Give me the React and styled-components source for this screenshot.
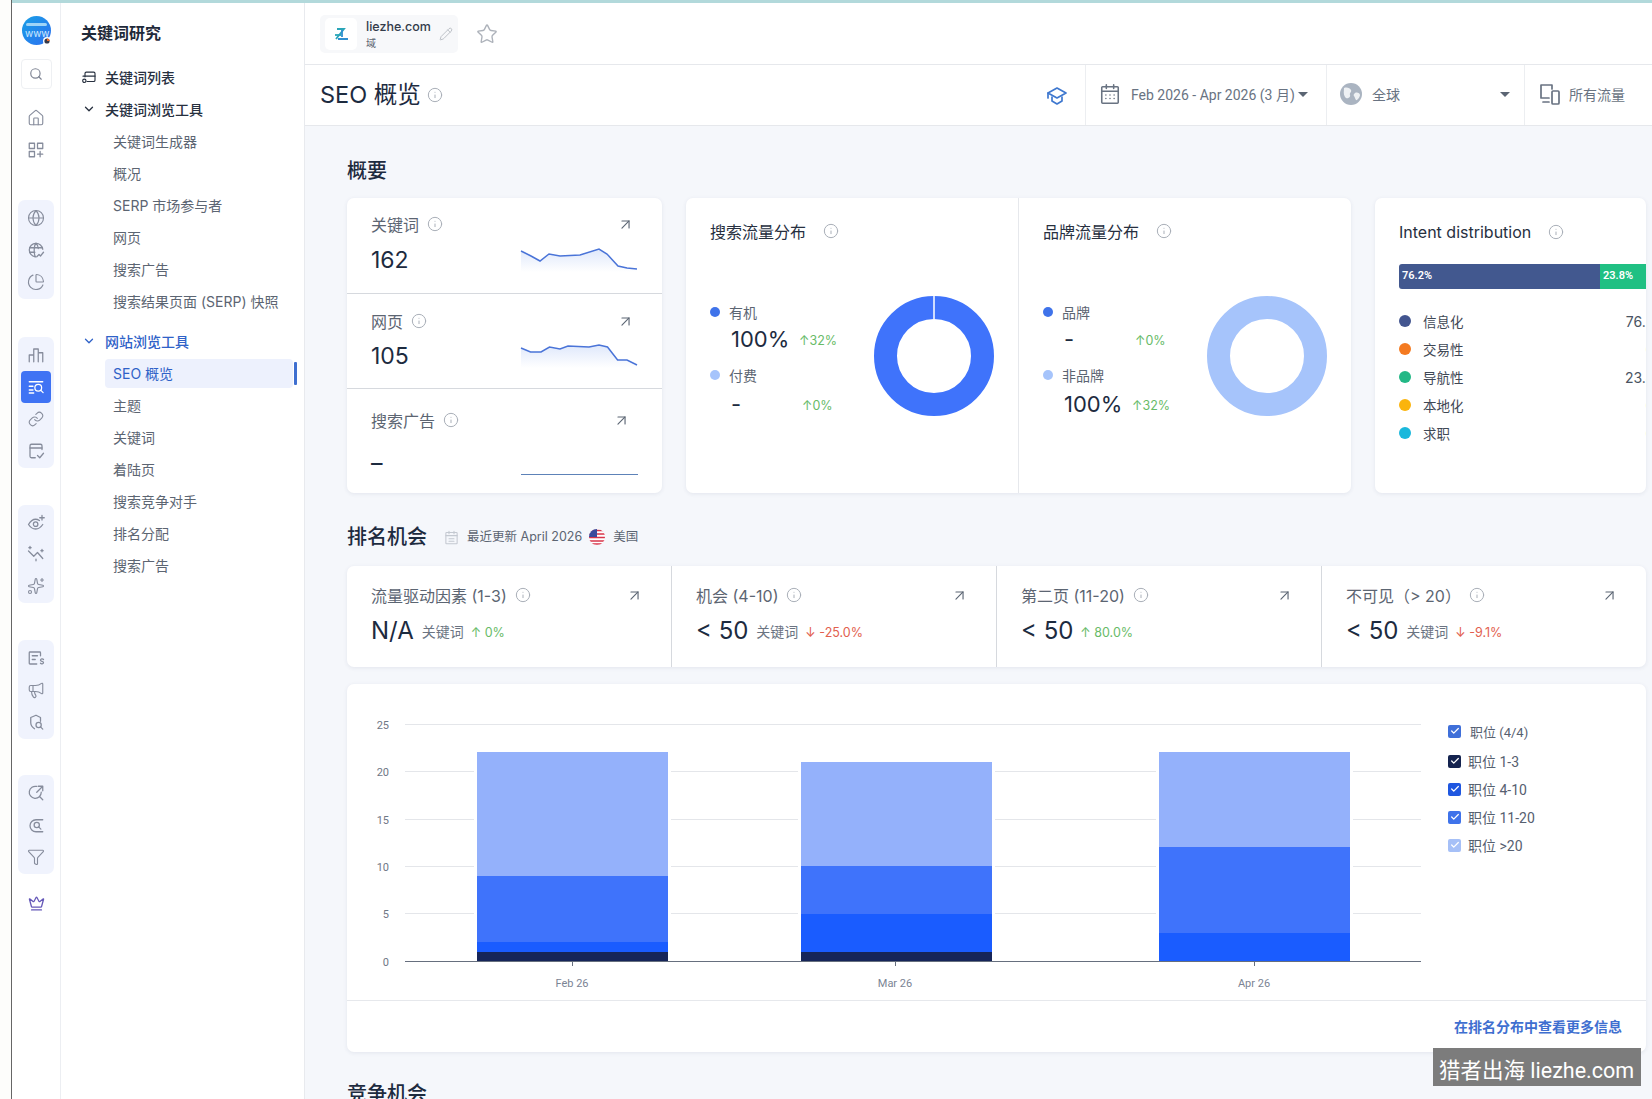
import React from "react";
import styled, { createGlobalStyle } from "styled-components";
import { Search, House, Globe, ChartPie, Link as LinkIcon, Sparkles, Megaphone, Funnel, Crown, Star, Pencil, Info, ArrowUpRight, ChevronDown, Check } from "lucide-react";

const Global = createGlobalStyle`
  html, body { margin: 0; padding: 0; height: 100%; background: #fff; overflow: hidden; }
  * { box-sizing: border-box; }
  body { font-family: Inter, "Noto Sans CJK SC", sans-serif; color: #1f2a3a; }
`;

const Page = styled.div`display: flex; position: relative; width: 1652px; height: 1099px; overflow: hidden; background: #fff;`;
const Gutter = styled.div`width: 12px; flex: none; background: #fdfdfb; border-right: 1px solid #666;`;
const Shell = styled.div`flex: 1; min-width: 0; display: flex; flex-direction: column;`;
const Strip = styled.div`height: 3px; flex: none; background: #b2d9db;`;
const Body = styled.div`flex: 1; display: flex; min-height: 0;`;

const Rail = styled.nav`width: 49px; flex: none; border-right: 1px solid #eceef2; display: flex; flex-direction: column; align-items: center;`;
const AvatarWrap = styled.div`margin-top: 13px; width: 29px; height: 29px;`;
const SearchBox = styled.div`margin-top: 14px; width: 31px; height: 30px; border: 1px solid #eef0f3; border-radius: 4px; display: flex; align-items: center; justify-content: center; color: #7f8594;`;
const RailBtn = styled.div`
  width: 30px; height: ${p => p.$h || 32}px; border-radius: 4px; display: flex; align-items: center; justify-content: center;
  color: ${p => (p.$active ? "#fff" : "#868c9c")};
  background: ${p => (p.$active ? "#3f73f4" : "transparent")};
`;
const RailPlain = styled.div`margin-top: ${p => p.$top}px; display: flex; flex-direction: column; align-items: center;`;
const RailGroup = styled.div`margin-top: ${p => p.$top}px; width: 36px; padding: 2px 0 1px; border-radius: 7px; background: #f0f3fd; display: flex; flex-direction: column; align-items: center;`;
const CrownBtn = styled.div`margin-top: 14px; height: 32px; display: flex; align-items: center; color: #6558b8;`;

const Side = styled.aside`width: 244px; flex: none; border-right: 1px solid #e8eaee; padding: 20px 0 0 20px; display: flex; flex-direction: column;`;
const SideTitle = styled.div`font-size: 16px; line-height: 20px; font-weight: 700; color: #1f2a3a; margin-bottom: 18px;`;
const Head = styled.div`
  height: 32px; flex: none; display: flex; align-items: center; gap: 8px; font-size: 14px; font-weight: 500;
  margin-top: ${p => p.$top || 0}px;
  color: ${p => (p.$blue ? "#2f62c8" : "#27303f")};
`;
const HeadIcon = styled.span`width: 16px; display: flex; justify-content: center;`;
const Child = styled.div`
  position: relative; height: 29px; flex: none; margin: 1.5px 0 1.5px 24px; width: 188px; padding-left: 8px; border-radius: 4px;
  display: flex; align-items: center; font-size: 14px;
  color: ${p => (p.$active ? "#2f62c8" : "#5c6572")};
  background: ${p => (p.$active ? "#edf1fd" : "transparent")};
`;
const ActiveMark = styled.span`position: absolute; right: -4px; top: 3px; width: 3px; height: 23px; background: #3f6fd0; border-radius: 1px;`;

const Main = styled.main`flex: 1; min-width: 0; display: flex; flex-direction: column; background: #f5f7fb;`;
const TopBar = styled.div`height: 62px; flex: none; background: #fff; border-bottom: 1px solid #e6e8ec; padding: 12px 0 0 15px; display: flex; gap: 18px; align-items: flex-start;`;
const DomainChip = styled.div`width: 138px; height: 38px; border-radius: 5px; background: #f7f8fa; display: flex; align-items: center; padding-left: 5px;`;
const LogoBox = styled.div`width: 32px; height: 32px; background: #fff; border-radius: 5px; display: flex; align-items: center; justify-content: center; flex: none;`;
const DomainText = styled.div`margin: 2px 0 0 9px; width: 73px;`;
const DomainName = styled.div`font-size: 12.5px; font-weight: 500; line-height: 16px; color: #333c4a;`;
const DomainType = styled.div`font-size: 10px; line-height: 16px; color: #5c6572;`;
const PencilIcon = styled.span`color: #b5b9c0; display: flex;`;
const StarIcon = styled.span`color: #adb2ba; display: flex; margin-top: 8px;`;

const TitleBar = styled.div`height: 61px; flex: none; background: #fff; border-bottom: 1px solid #e6e8ec; display: flex; align-items: stretch; padding-left: 15px;`;
const PageTitle = styled.h1`margin: 0; align-self: center; font-size: 23.5px; font-weight: 400; color: #1d2b3f; line-height: 30px; display: flex; align-items: center; gap: 6px;`;
const CapBtn = styled.div`margin-left: auto; width: 56px; display: flex; align-items: center; justify-content: center; color: #3f78cf;`;
const FilterCell = styled.div`
  width: ${p => p.$w}px; border-left: 1px solid #eceef1; padding: 0 0 2px 13px; display: flex; align-items: center;
  font-size: 14px; color: #697382; font-family: Roboto, "Noto Sans CJK SC", sans-serif;
`;
const FilterText = styled.span`margin-left: ${p => p.$gap}px; white-space: nowrap;`;
const Caret = styled.span`width: 0; height: 0; border-left: 5px solid transparent; border-right: 5px solid transparent; border-top: 5px solid #5b6573; margin-left: ${p => p.$auto ? "auto" : "3px"}; margin-right: ${p => p.$auto ? "14px" : "0"};`;

const Content = styled.div`flex: 1; min-height: 0; overflow: hidden; padding: 31px 6px 0 42px;`;
const SectionTitle = styled.h2`
  margin: ${p => p.$top || 0}px 0 ${p => p.$bottom || 0}px; font-size: 20px; line-height: 28px; font-weight: 500; color: #1d2b3f; display: flex; align-items: center;
`;
const Card = styled.div`background: #fff; border-radius: 7px; box-shadow: 0 1px 4px rgba(40, 60, 100, 0.09);`;
const Overview = styled.div`display: flex; gap: 24px; height: 295px;`;
const Metrics = styled(Card)`width: 315px; display: flex; flex-direction: column;`;
const MetricRow = styled.div`
  height: ${p => p.$h}px; padding: ${p => p.$pt}px 24px 0 24px; flex: none;
  border-bottom: ${p => (p.$last ? "none" : "1px solid #d6d9de")};
`;
const LabelLine = styled.div`display: flex; align-items: center; height: 20px; font-size: 16px; color: #5c6572; gap: 8px; white-space: nowrap;`;
const OpenLink = styled.span`margin-left: auto; margin-right: ${p => p.$mr || 4}px; color: #5b6573; display: flex;`;
const MetricValueRow = styled.div`display: flex; justify-content: space-between; align-items: center; height: ${p => p.$h || 34}px; margin-top: ${p => p.$top || 8}px;`;
const MetricValue = styled.div`font-size: 23px; line-height: 34px; color: #1d2b3f;`;
const InfoIcon = styled.span`color: #a9afb8; display: inline-flex; margin-left: ${p => p.$ml || 0}px;`;

const Traffic = styled(Card)`width: 665px; display: flex;`;
const Pane = styled.div`width: ${p => p.$w}px; padding: 23px 0 0 24px; border-right: ${p => p.$line ? "1px solid #e6e8ec" : "none"};`;
const PaneTitle = styled.div`display: flex; align-items: center; height: 20px; font-size: 16px; color: #27303f; white-space: nowrap;`;
const PaneBody = styled.div`display: flex; margin-top: 55px;`;
const Legend = styled.div`width: 164px; padding-top: 6px; flex: none;`;
const LegendItem = styled.div`height: 52px; margin-bottom: 11px;`;
const LegendLabel = styled.div`height: 20px; display: flex; align-items: center; gap: 9px; font-size: 14px; color: #5c6572;`;
const Dot = styled.span`width: ${p => p.$size || 10}px; height: ${p => p.$size || 10}px; border-radius: 50%; background: ${p => p.$color}; flex: none;`;
const LegendValues = styled.div`display: flex; align-items: center; height: 32px; margin-left: 21px; margin-top: ${p => p.$drop || 0}px;`;
const ShareValue = styled.span`width: ${p => p.$w}px; font-size: 22px; color: #1d2b3f; flex: none;`;
const Delta = styled.span`font-size: 12.5px; white-space: nowrap; color: ${p => (p.$down ? "#e2604e" : "#68bb68")}; margin-top: 3px; margin-left: ${p => p.$ml || 0}px;`;

const Intent = styled(Card)`width: 271px; padding: 24px 0 0 24px; overflow: hidden;`;
const IntentBar = styled.div`display: flex; width: 247px; height: 25px; margin-top: 22px; border-radius: 3px 0 0 3px; overflow: hidden; font-family: Roboto, sans-serif; font-size: 11px; font-weight: 600; color: #fff; line-height: 24px;`;
const IntentSeg = styled.div`padding-left: 3px; background: ${p => p.$color}; width: ${p => p.$w}px; flex: none;`;
const IntentRows = styled.div`margin-top: 18px; width: 269px;`;
const IntentRow = styled.div`display: flex; align-items: center; height: 28px; font-size: 13.5px; color: #3f4855; gap: 12px;`;
const IntentPct = styled.span`margin-left: auto; font-size: 14px; color: #4a5462;`;

const RankRow = styled(Card)`display: flex; height: 101px;`;
const RankCell = styled.div`flex: 1; padding: 19px 0 0 24px; border-right: ${p => p.$last ? "none" : "1px solid #d6d9de"};`;
const RankValue = styled.span`font-size: 24px; line-height: 34px; color: #1d2b3f;`;
const RankUnit = styled.span`font-size: 14px; color: #6b7482; margin-left: 8px;`;
const RankValues = styled.div`display: flex; align-items: center; height: 34px; margin-top: 9px;`;
const UpdateNote = styled.span`margin-left: 17px; display: flex; align-items: center; font-size: 12.5px; font-weight: 400; color: #5c6572;`;
const NoteIcon = styled.span`color: #c4c9d1; display: flex; margin-right: 8px;`;
const NoteCountry = styled.span`margin: 0 0 0 8px;`;
const FlagWrap = styled.span`display: flex; margin-left: 7px;`;

const ChartCard = styled(Card)`height: 368px; margin-top: 17px;`;
const ChartTop = styled.div`height: 317px; display: flex; border-bottom: 1px solid #e6e8ec;`;
const ChartSvg = styled.svg`flex: none; display: block; font-family: Roboto, sans-serif;`;
const ChartLegend = styled.div`padding: 33px 0 0 11px; font-family: Roboto, "Noto Sans CJK SC", sans-serif;`;
const CheckRow = styled.div`display: flex; align-items: center; height: 28px; gap: ${p => p.$gap}px; font-size: ${p => p.$fs || 14}px; color: #566070; margin-bottom: ${p => p.$mb || 0}px;`;
const CheckBox = styled.span`width: 13px; height: 13px; border-radius: 2px; background: ${p => p.$color}; color: #fff; display: flex; align-items: center; justify-content: center; flex: none;`;
const ChartFoot = styled.div`height: 50px; display: flex; align-items: center; justify-content: flex-end; padding-right: 24px;`;
const MoreLink = styled.a`font-size: 14px; font-weight: 700; color: #3f6fd0;`;

const Watermark = styled.div`position: absolute; left: 1433px; top: 1048px; width: 208px; height: 38px; background: #7c7c7c; color: #fff; font-size: 21.500px; line-height: 46px; padding-left: 6px; white-space: nowrap; overflow: hidden; font-family: Roboto, "Noto Sans CJK SC", sans-serif;`;

const Line = ({ size = 18, children }) => (
  <svg width={size} height={size} viewBox="0 0 24 24" fill="none" stroke="currentColor" strokeWidth="1.7" strokeLinecap="round" strokeLinejoin="round">{children}</svg>
);
const I = ({ ml, size = 16 }) => <InfoIcon $ml={ml}><Info size={size} strokeWidth={1.5} /></InfoIcon>;
const Arrow = ({ mr }) => <OpenLink $mr={mr}><ArrowUpRight size={17} strokeWidth={1.6} /></OpenLink>;

const Avatar = () => (
  <svg width="29" height="29" viewBox="0 0 29 29">
    <defs><linearGradient id="av" x1="0" y1="0" x2="1" y2="1"><stop offset="0" stopColor="#19a0e6" /><stop offset="1" stopColor="#2d6ff0" /></linearGradient></defs>
    <circle cx="14.5" cy="14.5" r="14.5" fill="url(#av)" />
    <rect x="4" y="7" width="21" height="3" rx="1.5" fill="#9fd4f7" />
    <text x="3" y="21" fontSize="10" fill="#cfeaff" fontFamily="Inter">www</text>
    <circle cx="25" cy="25" r="4" fill="#fff" /><circle cx="25" cy="25" r="2.6" fill="#33384a" /><path d="M25 22.4a2.6 2.6 0 0 1 2.6 2.6H25z" fill="#ee6a2b" />
  </svg>
);
const ZLogo = () => (
  <svg width="16" height="16" viewBox="0 0 16 16" fill="none" strokeWidth="1.8">
    <path d="M4 3h7L3 13" stroke="#2aa5b8" />
    <path d="M9 4v7M5 13h10" stroke="#2f8fd0" />
    <path d="M2 9h6" stroke="#2aa5b8" />
  </svg>
);
const Flag = () => (
  <svg width="16" height="16" viewBox="0 0 16 16">
    <defs><clipPath id="fl"><circle cx="8" cy="8" r="8" /></clipPath></defs>
    <g clipPath="url(#fl)">
      <rect width="16" height="16" fill="#fff" />
      <path d="M0 1.5h16M0 5h16M0 8.5h16M0 12h16M0 15h16" stroke="#d8344a" strokeWidth="1.7" />
      <rect width="8" height="8" fill="#3a4a9c" />
    </g>
  </svg>
);

const railGroups = [
  { top: 34, icons: [
    <Globe size={18} strokeWidth={1.5} />,
    <Line><path d="M21 11a9 9 0 1 0-10 10" /><path d="M12 3c-3 3-3 13-1 18M12 3c2 2 3 4 3 7M3.5 9h17M3.5 15h7" /><path d="M13 21l3-3 2 2 4-5" /></Line>,
    <ChartPie size={18} strokeWidth={1.5} />,
  ] },
  { top: 38, active: 1, icons: [
    <Line><path d="M3 21V12h6v9M9 21V4h6v17M15 21V9h6v12" /></Line>,
    <Line><path d="M3 5h18M3 11h5M3 16h5M3 20h6" /><circle cx="15" cy="13" r="4.5" /><path d="M18.5 16.5l3 3" /></Line>,
    <LinkIcon size={16} strokeWidth={1.6} />,
    <Line><path d="M20 10V5a2 2 0 0 0-2-2H6a2 2 0 0 0-2 2v14a2 2 0 0 0 2 2h5" /><path d="M4 8h16M14 18l3 3 5-6" /></Line>,
  ] },
  { top: 37, h: 31.500, icons: [
    <Line><path d="M2 14s4-7 9.5-7c2 0 3.5.7 5 1.7M21 14s-4 6-9.5 6S2 14 2 14" /><circle cx="11.5" cy="13.5" r="3" /><path d="M20 2v6M17 5h6" /></Line>,
    <Line><path d="M2 8l7 7 5-5 7 8" /><path d="M4 2v3M2.5 3.5h3M20 6v3M18.5 7.500h3M12 19v2" /></Line>,
    <Sparkles size={18} strokeWidth={1.5} />,
  ] },
  { top: 37, icons: [
    <Line><path d="M18 9V5a1 1 0 0 0-1-1H4a1 1 0 0 0-1 1v14a1 1 0 0 0 1 1h9M7 9h7M7 14h4" /><path d="M22 14c-1-1.200-4-1-4 1s4 1 4 3-3 2.200-4 1" /></Line>,
    <Megaphone size={18} strokeWidth={1.5} />,
    <Line><path d="M18 11V6l-6-3-7 3v7c0 4 2 6 5 8" /><circle cx="15.500" cy="16" r="3.500" /><path d="M18 18.500l3 3" /></Line>,
  ] },
  { top: 36, icons: [
    <Line><path d="M19 11a8 8 0 1 1-6-7.700" /><path d="M15 3h6v6M21 3l-8 8M17 17l4 4" /></Line>,
    <Line><path d="M21 5h-9a8 8 0 0 0 0 16h9" /><circle cx="13" cy="12" r="3.500" /><path d="M15.500 14.500l3 3" /></Line>,
    <Funnel size={18} strokeWidth={1.5} />,
  ] },
];

const sparkA = "M1 3 L11 8 L20 13 L29 6 L40 8 L60 7 L79 1 L87 6 L98 18 L107 20 L117 21";
const sparkB = "M1 4 L10.500 8 L21 8 L29.500 3 L40 5 L48 2 L69 3 L79 1 L87.500 3 L97.600 16 L107 16 L117 21";

const Spark = ({ d, id }) => (
  <svg width="118" height="24" viewBox="0 0 118 24" fill="none">
    <defs><linearGradient id={id} x1="0" y1="0" x2="0" y2="1"><stop offset="0" stopColor="#dfe8fb" /><stop offset="1" stopColor="#fff" /></linearGradient></defs>
    <path d={`${d} L117 24 L1 24 Z`} fill={`url(#${id})`} />
    <path d={d} stroke="#4a74d8" strokeWidth="1.500" />
  </svg>
);

const Donut = ({ color, slit }) => (
  <svg width="120" height="120" viewBox="0 0 120 120">
    <circle cx="60" cy="60" r="48.500" fill="none" stroke={color} strokeWidth="23" />
    {slit && <path d="M60 0v23" stroke="#fff" strokeWidth="1.500" />}
  </svg>
);

const trafficPane = (title, w, line, items, color, slit) => (
  <Pane $w={w} $line={line}>
    <PaneTitle>{title}<I ml={17} /></PaneTitle>
    <PaneBody>
      <Legend>
        {items.map((it, i) => (
          <LegendItem key={it.label}>
            <LegendLabel><Dot $color={i === 0 ? "#3f73ea" : "#a6c4fb"} />{it.label}</LegendLabel>
            <LegendValues $drop={i === 1 ? 3 : 1}>
              <ShareValue $w={it.w}>{it.value}</ShareValue>
              <Delta>{it.delta}</Delta>
            </LegendValues>
          </LegendItem>
        ))}
      </Legend>
      <Donut color={color} slit={slit} />
    </PaneBody>
  </Pane>
);

const navA = ["关键词生成器", "概况", "SERP 市场参与者", "网页", "搜索广告", "搜索结果页面 (SERP) 快照"];
const navB = ["SEO 概览", "主题", "关键词", "着陆页", "搜索竞争对手", "排名分配", "搜索广告"];

const intents = [
  ["信息化", "#42558f", "76.2%"],
  ["交易性", "#f47a20", "0%"],
  ["导航性", "#23b886", "23.8%"],
  ["本地化", "#fbb40d", "0%"],
  ["求职", "#1ab8dc", "0%"],
];

const ranks = [
  { title: "流量驱动因素 (1-3)", value: "N/A", unit: "关键词", delta: "↑ 0%" },
  { title: "机会 (4-10)", value: "< 50", unit: "关键词", delta: "↓ -25.0%", down: true },
  { title: "第二页 (11-20)", value: "< 50", delta: "↑ 80.0%" },
  { title: "不可见（> 20）", value: "< 50", unit: "关键词", delta: "↓ -9.1%", down: true },
];

const unit = 9.48;
const segColors = ["#162559", "#1a5cff", "#3f73fb", "#94b1fb"];
const bars = [
  { x: 130, w: 191, tick: 225, label: "Feb 26", vals: [1, 1, 7, 13] },
  { x: 454, w: 191, tick: 548, label: "Mar 26", vals: [1, 4, 5, 11] },
  { x: 812, w: 191, tick: 907, label: "Apr 26", vals: [0, 3, 9, 10] },
];
const gridY = [[25, 40], [20, 87], [15, 135], [10, 182], [5, 229]];

const Chart = () => (
  <ChartSvg width="1090" height="317" viewBox="0 0 1090 317" shapeRendering="crispEdges">
    {gridY.map(([v, y]) => (
      <g key={v}>
        <path d={`M58 ${y}H1074`} stroke="#e4e6ea" />
        <text x="42" y={y + 5} textAnchor="end" fontSize="11" fill="#6f7785">{v}</text>
      </g>
    ))}
    <text x="42" y="282" textAnchor="end" fontSize="11" fill="#6f7785">0</text>
    {bars.map(b => {
      const total = b.vals.reduce((a, c) => a + c, 0);
      const top = Math.round(277 - total * unit);
      let acc = 0;
      return (
        <g key={b.label}>
          <rect x={b.x - 3} y={top} width={b.w + 6} height={277 - top} fill="#fff" />
          {b.vals.map((v, i) => {
            const y0 = Math.round(277 - acc * unit);
            acc += v;
            const y1 = Math.round(277 - acc * unit);
            return v ? <rect key={i} x={b.x} y={y1} width={b.w} height={y0 - y1} fill={segColors[i]} /> : null;
          })}
          <path d={`M${b.tick} 277v5`} stroke="#666f7e" />
          <text x={b.tick} y="303" textAnchor="middle" fontSize="11" fill="#7b8494">{b.label}</text>
        </g>
      );
    })}
    <path d="M58 277.500H1074" stroke="#666f7e" />
  </ChartSvg>
);

const checks = [
  ["职位 1-3", "#14234f"],
  ["职位 4-10", "#1f57e0"],
  ["职位 11-20", "#3f73ea"],
  ["职位 >20", "#a6c0f7"],
];

export default function App() {
  return (
    <Page>
      <Global />
      <Gutter />
      <Shell>
        <Strip />
        <Body>
          <Rail>
            <AvatarWrap><Avatar /></AvatarWrap>
            <SearchBox><Search size={14} strokeWidth={2} /></SearchBox>
            <RailPlain $top={13}>
              <RailBtn><House size={18} strokeWidth={1.5} /></RailBtn>
              <RailBtn><Line><rect x="3" y="3" width="7" height="7" /><rect x="14" y="3" width="7" height="7" /><rect x="3" y="14" width="7" height="7" /><path d="M17.500 14v7M14 17.500h7" /></Line></RailBtn>
            </RailPlain>
            {railGroups.map((g, gi) => (
              <RailGroup key={gi} $top={g.top}>
                {g.icons.map((ic, i) => <RailBtn key={i} $h={g.h} $active={g.active === i}>{ic}</RailBtn>)}
              </RailGroup>
            ))}
            <CrownBtn><Crown size={17} strokeWidth={1.8} /></CrownBtn>
          </Rail>

          <Side>
            <SideTitle>关键词研究</SideTitle>
            <Head>
              <HeadIcon><Line size={17}><path d="M6 11V6a2 2 0 0 1 2-2h11a2 2 0 0 1 2 2v10a2 2 0 0 1-2 2H9" /><path d="M3 10h18" /><circle cx="5" cy="17" r="2.500" /></Line></HeadIcon>
              关键词列表
            </Head>
            <Head>
              <HeadIcon><ChevronDown size={14} strokeWidth={2.200} /></HeadIcon>
              关键词浏览工具
            </Head>
            {navA.map(t => <Child key={t}>{t}</Child>)}
            <Head $blue $top={8}>
              <HeadIcon><ChevronDown size={14} strokeWidth={2.200} /></HeadIcon>
              网站浏览工具
            </Head>
            {navB.map((t, i) => (
              <Child key={t} $active={i === 0}>{t}{i === 0 && <ActiveMark />}</Child>
            ))}
          </Side>

          <Main>
            <TopBar>
              <DomainChip>
                <LogoBox><ZLogo /></LogoBox>
                <DomainText>
                  <DomainName>liezhe.com</DomainName>
                  <DomainType>域</DomainType>
                </DomainText>
                <PencilIcon><Pencil size={14} strokeWidth={1.500} /></PencilIcon>
              </DomainChip>
              <StarIcon><Star size={22} strokeWidth={1.500} /></StarIcon>
            </TopBar>
            <TitleBar>
              <PageTitle>SEO 概览 <I /></PageTitle>
              <CapBtn>
                <Line size={24}><path d="M12 5l9 5-9 5-9-5z" /><path d="M3 10v5" /><path d="M7 14v4l5 3 5-3v-4" /></Line>
              </CapBtn>
              <FilterCell $w={241}>
                <Line size={22}><rect x="3" y="4" width="18" height="18" rx="1" /><path d="M3 9h18M8 2v4M16 2v4M7.500 13h.01M12 13h.01M16.500 13h.01M7.500 17h.01M12 17h.01M16.500 17h.01" /></Line>
                <FilterText $gap={10}>Feb 2026 - Apr 2026 (3 月)</FilterText>
                <Caret />
              </FilterCell>
              <FilterCell $w={198}>
                <svg width="22" height="22" viewBox="0 0 22 22"><circle cx="11" cy="11" r="11" fill="#aab4c1" /><path d="M4 5c3-1 6 0 7 2s-2 3-1 5-3 5-5 2-1-6-1-9zM15 10c2-1 5 0 5 2s-3 6-4 5-1-3-2-4 0-2 1-3z" fill="#eef1f4" /></svg>
                <FilterText $gap={10}>全球</FilterText>
                <Caret $auto />
              </FilterCell>
              <FilterCell $w={128}>
                <Line size={24}><path d="M14 7V3H3v13h8M5 20h6" /><rect x="14" y="9" width="7" height="13" rx="1" /></Line>
                <FilterText $gap={7}>所有流量</FilterText>
              </FilterCell>
            </TitleBar>

            <Content>
              <SectionTitle $bottom={13}>概要</SectionTitle>
              <Overview>
                <Metrics>
                  <MetricRow $h={96} $pt={16}>
                    <LabelLine>关键词 <I /><Arrow /></LabelLine>
                    <MetricValueRow $top={9}><MetricValue>162</MetricValue><Spark d={sparkA} id="sa" /></MetricValueRow>
                  </MetricRow>
                  <MetricRow $h={95} $pt={17}>
                    <LabelLine>网页 <I /><Arrow /></LabelLine>
                    <MetricValueRow><MetricValue>105</MetricValue><Spark d={sparkB} id="sb" /></MetricValueRow>
                  </MetricRow>
                  <MetricRow $h={104} $pt={21} $last>
                    <LabelLine>搜索广告 <I /><Arrow mr={8} /></LabelLine>
                    <MetricValueRow $top={13} $h={40}>
                      <MetricValue>–</MetricValue>
                      <svg width="118" height="24" viewBox="0 0 118 24"><path d="M1 23.500H118" stroke="#5d82b8" strokeWidth="1.200" /></svg>
                    </MetricValueRow>
                  </MetricRow>
                </Metrics>

                <Traffic>
                  {trafficPane("搜索流量分布", 333, true, [
                    { label: "有机", value: "100%", delta: "↑32%", w: 68 },
                    { label: "付费", value: "-", delta: "↑0%", w: 71 },
                  ], "#3f73fb", true)}
                  {trafficPane("品牌流量分布", 332, false, [
                    { label: "品牌", value: "-", delta: "↑0%", w: 71 },
                    { label: "非品牌", value: "100%", delta: "↑32%", w: 68 },
                  ], "#a6c4fb", false)}
                </Traffic>

                <Intent>
                  <PaneTitle>Intent distribution<I ml={17} /></PaneTitle>
                  <IntentBar>
                    <IntentSeg $color="#42588f" $w={201}>76.2%</IntentSeg>
                    <IntentSeg $color="#20c083" $w={46}>23.8%</IntentSeg>
                  </IntentBar>
                  <IntentRows>
                    {intents.map(([n, c, v]) => (
                      <IntentRow key={n}><Dot $color={c} $size={12} />{n}<IntentPct>{v}</IntentPct></IntentRow>
                    ))}
                  </IntentRows>
                </Intent>
              </Overview>

              <SectionTitle $top={30} $bottom={15}>
                排名机会
                <UpdateNote>
                  <NoteIcon><Line size={15}><rect x="3" y="4" width="18" height="18" rx="1" /><path d="M3 9h18M8 2v4M16 2v4M8 14h8M8 18h8" /></Line></NoteIcon>
                  最近更新 April 2026
                  <FlagWrap><Flag /></FlagWrap>
                  <NoteCountry>美国</NoteCountry>
                </UpdateNote>
              </SectionTitle>
              <RankRow>
                {ranks.map((r, i) => (
                  <RankCell key={r.title} $last={i === 3}>
                    <LabelLine>{r.title} <I /><Arrow mr={28} /></LabelLine>
                    <RankValues>
                      <RankValue>{r.value}</RankValue>
                      {r.unit && <RankUnit>{r.unit}</RankUnit>}
                      <Delta $down={r.down} $ml={7}>{r.delta}</Delta>
                    </RankValues>
                  </RankCell>
                ))}
              </RankRow>

              <ChartCard>
                <ChartTop>
                  <Chart />
                  <ChartLegend>
                    <CheckRow $gap={9} $mb={2} $fs={13}>
                      <CheckBox $color="#3f6fd9"><Check size={10} strokeWidth={3} /></CheckBox>
                      职位 (4/4)
                    </CheckRow>
                    {checks.map(([t, c]) => (
                      <CheckRow key={t} $gap={7}>
                        <CheckBox $color={c}><Check size={10} strokeWidth={3} /></CheckBox>
                        {t}
                      </CheckRow>
                    ))}
                  </ChartLegend>
                </ChartTop>
                <ChartFoot><MoreLink>在排名分布中查看更多信息</MoreLink></ChartFoot>
              </ChartCard>

              <SectionTitle $top={28}>竞争机会</SectionTitle>
            </Content>
          </Main>
        </Body>
      </Shell>
      <Watermark>猎者出海 liezhe.com</Watermark>
    </Page>
  );
}
